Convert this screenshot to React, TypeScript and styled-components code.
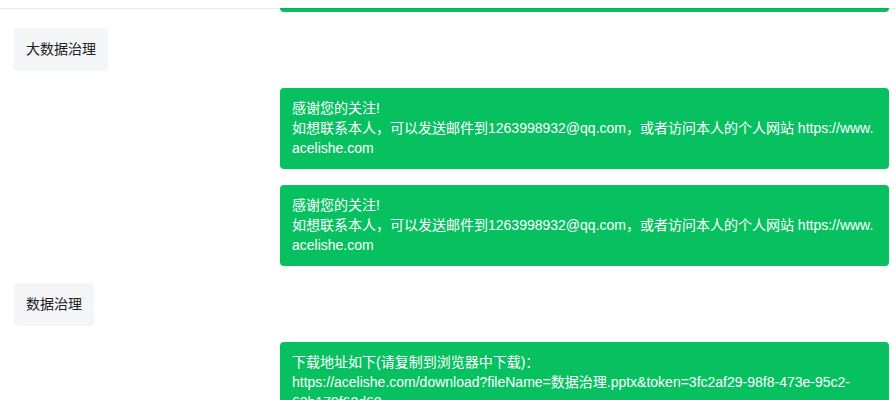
import React from 'react';
import styled, { createGlobalStyle } from 'styled-components';

const GlobalStyle = createGlobalStyle`
  html, body {
    margin: 0;
    padding: 0;
    background: #ffffff;
  }
  body {
    font-family: "Liberation Sans", "Noto Sans CJK SC", sans-serif;
    font-size: 14px;
    color: #222222;
  }
`;

interface Message {
  id: string;
  from: 'user' | 'bot';
  lines: string[];
}

const contactLines = [
  '感谢您的关注!',
  '如想联系本人，可以发送邮件到1263998932@qq.com，或者访问本人的个人网站 https://www.',
  'acelishe.com',
];

const messages: Message[] = [
  { id: 'm1', from: 'user', lines: ['大数据治理'] },
  { id: 'm2', from: 'bot', lines: contactLines },
  { id: 'm3', from: 'bot', lines: contactLines },
  { id: 'm4', from: 'user', lines: ['数据治理'] },
  {
    id: 'm5',
    from: 'bot',
    lines: [
      '下载地址如下(请复制到浏览器中下载)：',
      'https://acelishe.com/download?fileName=数据治理.pptx&token=3fc2af29-98f8-473e-95c2-',
      '63b179f62d60',
    ],
  },
];

const App: React.FC = () => {
  return (
    <>
      <GlobalStyle />
      <S.Viewport>
        <S.TopBar />
        <S.List>
          {/* tail of the previous reply, scrolled up under the bar */}
          <S.ScrolledTail />
          {messages.map(({ id, from, lines }) =>
            from === 'user' ? (
              <S.UserBubble key={id}>{lines.join('')}</S.UserBubble>
            ) : (
              <S.BotBubble key={id}>
                {lines.map((line, i) => (
                  <React.Fragment key={i}>
                    {line}
                    {i < lines.length - 1 && <br />}
                  </React.Fragment>
                ))}
              </S.BotBubble>
            )
          )}
        </S.List>
      </S.Viewport>
    </>
  );
};

export default App;

const S = {
  Viewport: styled.div`
    position: relative;
    height: 100vh;
    overflow: hidden;
    background: #ffffff;
  `,
  TopBar: styled.div`
    position: absolute;
    top: 0;
    left: 0;
    right: 0;
    height: 8px;
    background: #ffffff;
    box-shadow: 0 1px 1px rgba(0, 0, 0, 0.08);
    z-index: 2;
  `,
  List: styled.div`
    display: flex;
    flex-direction: column;
    gap: 16.5px;
    padding: 0 7px 0 14px;
  `,
  ScrolledTail: styled.div`
    align-self: flex-end;
    width: 609px;
    height: 11.5px;
    background: #07c160;
    border-radius: 0 0 4px 4px;
  `,
  UserBubble: styled.div`
    align-self: flex-start;
    padding: 11px 12px;
    line-height: 21px;
    font-size: 14px;
    color: #222222;
    background: #f4f5f7;
    border-radius: 4px;
  `,
  BotBubble: styled.div`
    align-self: flex-end;
    box-sizing: border-box;
    width: 609px;
    padding: 10px 12px 11px;
    line-height: 20px;
    font-size: 14px;
    color: #ffffff;
    background: #07c160;
    border-radius: 4px;
    overflow-wrap: anywhere;
  `,
};
